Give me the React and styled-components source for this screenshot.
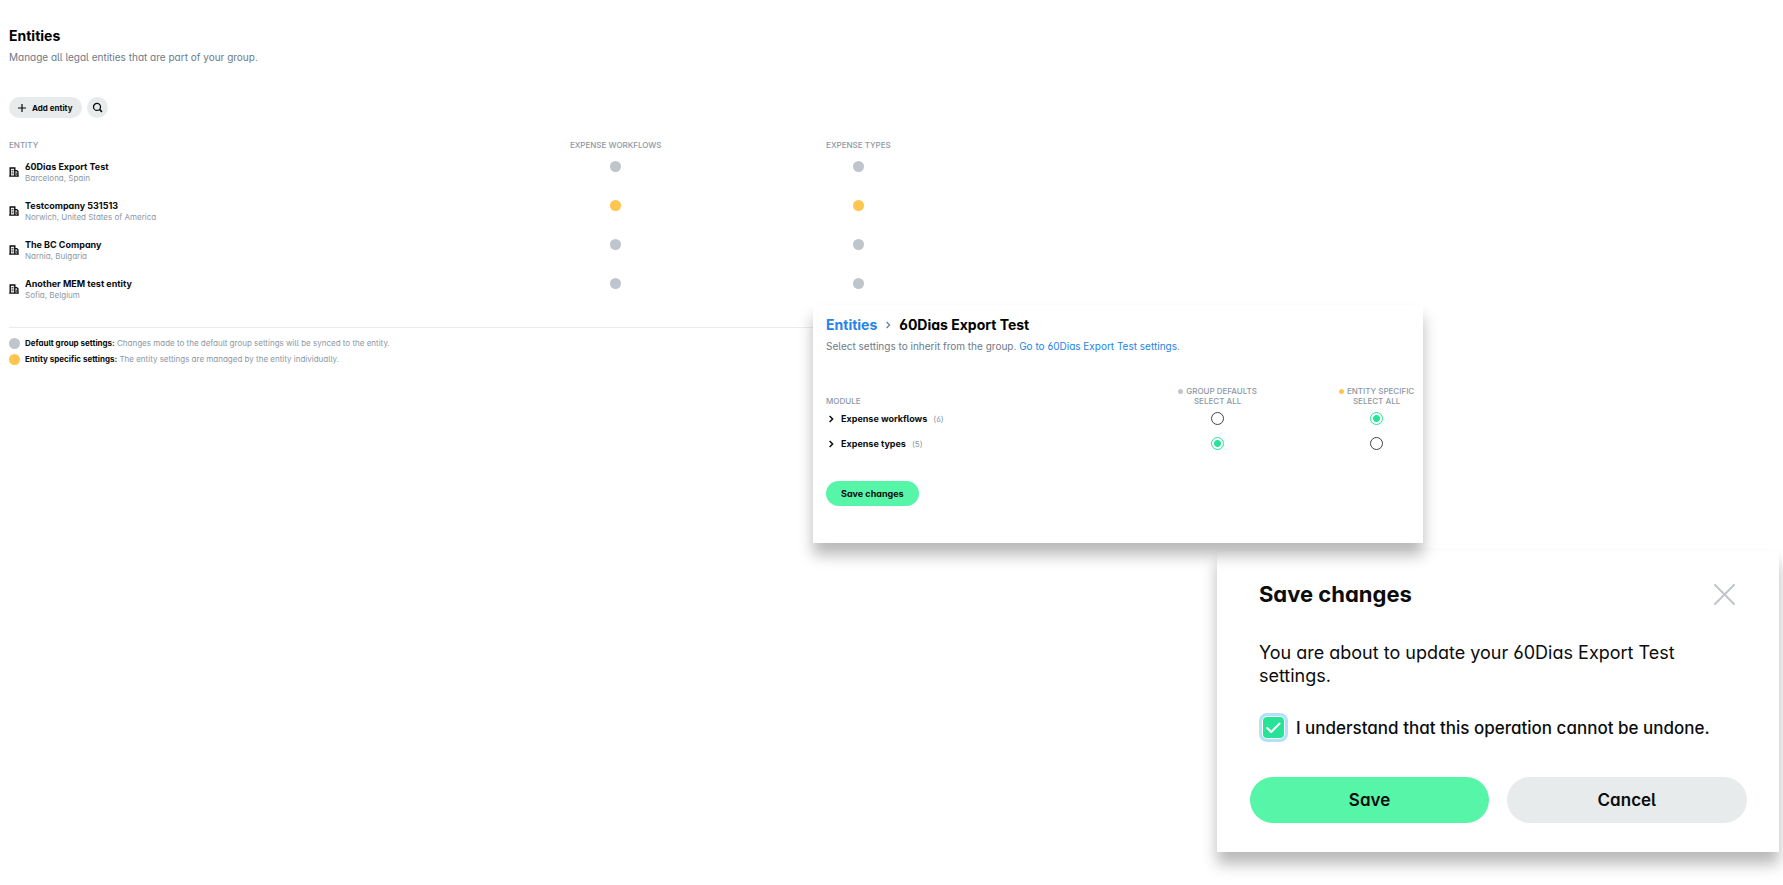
import React from "react";
import styled, { createGlobalStyle } from "styled-components";

const GlobalStyle = createGlobalStyle`
  *, *::before, *::after { box-sizing: border-box; }
  body {
    margin: 0;
    background: #fff;
    color: #0b0c0d;
    font-family: Inter, "Liberation Sans", sans-serif;
    font-feature-settings: "cv11", "cv05", "cv03", "cv04";
  }
  h1, h2, p, ul { margin: 0; padding: 0; }
  button, input { font: inherit; font-feature-settings: inherit; color: inherit; margin: 0; }
`;

const gray = "#bfc5cc";
const yellow = "#ffc54f";
const mint = "#57f5a8";
const green = "#27e397";
const muted = "#8c98a4";
const cloud = "#e7ebeb";

const Page = styled.div`
  position: relative;
  min-height: 100vh;
  padding: 26px 9px 0;
`;

const Title = styled.h1`
  display: flex;
  align-items: center;
  font-size: 14px;
  line-height: 20px;
  font-weight: 700;
  color: #000;
`;

const Subtitle = styled.p`
  margin-top: 3px;
  font-size: 10px;
  line-height: 16px;
  color: #6e7a87;
`;

const Link = styled.a`
  color: #2583ea;
  text-decoration: none;
`;

const Toolbar = styled.div`
  display: flex;
  gap: 5px;
  margin-top: 32px;
`;

const buttonSizes = {
  small: { height: 21, padding: "0 9px 0 8px", font: 8, weight: 700 },
  medium: { height: 25, padding: "0 15px", font: 9, weight: 700 },
  large: { height: 46, padding: "0 24px", font: 17, weight: 600 },
};

const Button = styled.button`
  display: inline-flex;
  align-items: center;
  justify-content: center;
  gap: 5px;
  height: ${(p) => buttonSizes[p.$size].height}px;
  padding: ${(p) => buttonSizes[p.$size].padding};
  flex: ${(p) => (p.$size === "large" ? "1" : "none")};
  border: 0;
  border-radius: 23px;
  background: ${(p) => (p.$primary ? mint : cloud)};
  font-size: ${(p) => buttonSizes[p.$size].font}px;
  font-weight: ${(p) => buttonSizes[p.$size].weight};
  white-space: nowrap;
`;

const IconButton = styled(Button)`
  width: 21px;
  padding: 0;
`;

const EntityArea = styled.section`
  width: 55%;
`;

const Table = styled.table`
  width: 100%;
  margin-top: ${(p) => p.$gap}px;
  border-collapse: collapse;
  table-layout: fixed;
`;

const Th = styled.th`
  width: ${(p) => p.$w};
  height: ${(p) => p.$h}px;
  padding: 0;
  vertical-align: ${(p) => p.$valign || "middle"};
  text-align: ${(p) => (p.$center ? "center" : "left")};
  font-size: 8px;
  line-height: 10px;
  font-weight: 500;
  color: ${muted};
  text-transform: uppercase;
  white-space: nowrap;
`;

const EntityCell = styled.td`
  height: 39px;
  padding: 10px 0 0;
  vertical-align: top;
`;

const DotCell = styled(EntityCell)`
  text-align: center;
  line-height: 0;
`;

const Entity = styled.div`
  display: flex;
  align-items: center;
  gap: 6px;
`;

const EntityName = styled.div`
  font-size: 9px;
  line-height: 12px;
  font-weight: 700;
`;

const EntityPlace = styled.div`
  font-size: 8px;
  line-height: 10px;
  color: ${muted};
`;

const Dot = styled.span`
  display: inline-block;
  flex: none;
  width: ${(p) => (p.$small ? 5 : 11)}px;
  height: ${(p) => (p.$small ? 5 : 11)}px;
  margin-right: ${(p) => (p.$small ? 3 : 0)}px;
  border-radius: 50%;
  background: ${(p) => (p.$specific ? yellow : gray)};
`;

const Legend = styled.ul`
  margin-top: 20px;
  padding-top: 7px;
  border-top: 1px solid #e9ebed;
  list-style: none;
`;

const LegendItem = styled.li`
  display: flex;
  align-items: center;
  gap: 5px;
  font-size: 8px;
  line-height: 16px;
  color: ${muted};
  strong { font-weight: 700; color: #0b0c0d; }
`;

const Floating = styled.section`
  position: absolute;
  background: #fff;
  box-shadow: 0 12px 14px rgba(0, 0, 0, 0.28);
`;

const SettingsPanel = styled(Floating)`
  z-index: 2;
  top: 305px;
  left: 45.6%;
  width: 34.2%;
  padding: 10px 8px 37px 13px;
`;

const Crumb = styled.span`
  display: inline-flex;
  margin: 0 6px;
`;

const ModuleCell = styled.td`
  height: 25px;
  padding: 0;
  text-align: ${(p) => (p.$center ? "center" : "left")};
  line-height: 0;
`;

const ModuleToggle = styled.button`
  display: flex;
  align-items: center;
  padding: 0;
  border: 0;
  background: none;
  font-size: 9px;
  line-height: 12px;
  font-weight: 700;
  svg { margin-right: 5px; }
  small {
    margin-left: 6px;
    font-size: 8px;
    font-weight: 400;
    color: ${muted};
  }
`;

const Radio = styled.input`
  appearance: none;
  width: 13px;
  height: 13px;
  border: 1px solid #3c444d;
  border-radius: 50%;
  background: #fff;
  &:checked {
    border-color: ${green};
    background: radial-gradient(circle, ${green} 3px, #fff 4px);
  }
`;

const SaveRow = styled.div`
  display: flex;
  margin-top: 25px;
`;

const Dialog = styled(Floating)`
  z-index: 1;
  top: 551px;
  left: 68.25%;
  width: 31.5%;
  padding: 29px 32px 29px 33px;
`;

const DialogHeader = styled.header`
  display: flex;
  align-items: center;
  justify-content: space-between;
  padding: 0 12px 0 9px;
`;

const DialogTitle = styled.h2`
  font-size: 22px;
  line-height: 28px;
  font-weight: 700;
`;

const CloseButton = styled.button`
  display: flex;
  padding: 0;
  border: 0;
  background: none;
`;

const DialogText = styled.p`
  margin-top: 33px;
  padding: 0 9px;
  font-size: 18px;
  line-height: 23px;
`;

const Confirm = styled.label`
  display: flex;
  align-items: center;
  gap: 8px;
  height: 29px;
  margin-top: 26px;
  padding: 0 0 0 9px;
  font-size: 17px;
  font-weight: 500;
  white-space: nowrap;
`;

const CheckWrap = styled.span`
  display: grid;
  flex: none;
  svg, input { grid-area: 1 / 1; place-self: center; }
  svg { pointer-events: none; z-index: 1; }
`;

const Checkbox = styled.input`
  appearance: none;
  width: 29px;
  height: 29px;
  border: 3px solid #b4e1f9;
  border-radius: 8px;
  background: #fff;
  &:checked {
    background: ${green} padding-box;
    box-shadow: inset 0 0 0 1px #fff;
  }
`;

const DialogActions = styled.div`
  display: flex;
  gap: 18px;
  margin-top: 35px;
`;

function PlusIcon() {
  return (
    <svg width="10" height="10" viewBox="0 0 10 10" fill="none" stroke="#0b0c0d" aria-hidden="true">
      <path d="M5 1v8M1 5h8" strokeWidth="1.2" />
    </svg>
  );
}

function SearchIcon() {
  return (
    <svg width="11" height="11" viewBox="0 0 11 11" fill="none" stroke="#0b0c0d" aria-hidden="true">
      <circle cx="5" cy="4.9" r="3.5" strokeWidth="1.3" />
      <path d="M7.5 7.4L10 9.9" strokeWidth="1.5" />
    </svg>
  );
}

function BuildingIcon() {
  return (
    <svg width="10" height="10" viewBox="0 0 10 10" fill="none" stroke="#0b0c0d" aria-hidden="true">
      <path d="M1.2 8.9V1h4.6v7.9M5.8 3.6h1.9l1.2 1.2v4.1M0.2 9.1h9.6" strokeWidth="1.4" />
      <path d="M2.5 3.4h2M2.5 5.1h2M2.5 6.8h2M7.3 5.6v2.4" strokeWidth="0.8" />
    </svg>
  );
}

function ChevronIcon({ color, strokeWidth, size }) {
  return (
    <svg width={size} height={size} viewBox="0 0 10 10" fill="none" stroke={color} strokeWidth={strokeWidth} aria-hidden="true">
      <path d="M3.6 2L6.6 5L3.6 8" />
    </svg>
  );
}

function CloseIcon() {
  return (
    <svg width="21" height="21" viewBox="0 0 21 21" fill="none" stroke={gray} strokeWidth="2" strokeLinecap="round" aria-hidden="true">
      <path d="M1 1l19 19M20 1L1 20" />
    </svg>
  );
}

function CheckIcon() {
  return (
    <svg width="15" height="12" viewBox="0 0 15 12" fill="none" stroke="#fff" strokeWidth="2" strokeLinecap="round" strokeLinejoin="round" aria-hidden="true">
      <path d="M1.2 6l4 4L13.5 1.5" />
    </svg>
  );
}

const entities = [
  { name: "60Dias Export Test", place: "Barcelona, Spain" },
  { name: "Testcompany 531513", place: "Norwich, United States of America", specific: true },
  { name: "The BC Company", place: "Narnia, Bulgaria" },
  { name: "Another MEM test entity", place: "Sofia, Belgium" },
];

const modules = [
  { name: "Expense workflows", count: 6, specific: true },
  { name: "Expense types", count: 5, specific: false },
];

export default function App() {
  return (
    <>
      <GlobalStyle />
      <Page>
        <Title>Entities</Title>
        <Subtitle>Manage all legal entities that are part of your group.</Subtitle>
        <Toolbar>
          <Button $size="small"><PlusIcon />Add entity</Button>
          <IconButton $size="small" aria-label="Search"><SearchIcon /></IconButton>
        </Toolbar>
        <EntityArea>
          <Table $gap={20}>
            <thead>
              <tr>
                <Th $w="50%" $h={13}>Entity</Th>
                <Th $w="25%" $h={13} $center>Expense workflows</Th>
                <Th $w="25%" $h={13} $center>Expense types</Th>
              </tr>
            </thead>
            <tbody>
              {entities.map((e) => (
                <tr key={e.name}>
                  <EntityCell>
                    <Entity>
                      <BuildingIcon />
                      <div>
                        <EntityName>{e.name}</EntityName>
                        <EntityPlace>{e.place}</EntityPlace>
                      </div>
                    </Entity>
                  </EntityCell>
                  <DotCell><Dot $specific={e.specific} /></DotCell>
                  <DotCell><Dot $specific={e.specific} /></DotCell>
                </tr>
              ))}
            </tbody>
          </Table>
          <Legend>
            <LegendItem>
              <Dot />
              <span><strong>Default group settings:</strong> Changes made to the default group settings will be synced to the entity.</span>
            </LegendItem>
            <LegendItem>
              <Dot $specific />
              <span><strong>Entity specific settings:</strong> The entity settings are managed by the entity individually.</span>
            </LegendItem>
          </Legend>
        </EntityArea>

        <SettingsPanel>
          <Title as="h2">
            <Link href="#entities">Entities</Link>
            <Crumb><ChevronIcon size={10} color="#6e7a87" strokeWidth="1.2" /></Crumb>
            60Dias Export Test
          </Title>
          <Subtitle>
            Select settings to inherit from the group. <Link href="#settings">Go to 60Dias Export Test settings</Link>.
          </Subtitle>
          <Table $gap={31}>
            <thead>
              <tr>
                <Th $w="46%" $h={21} $valign="bottom">Module</Th>
                <Th $w="41%" $h={21} $valign="bottom" $center><Dot $small />Group defaults<br />Select all</Th>
                <Th $w="13%" $h={21} $valign="bottom" $center><Dot $small $specific />Entity specific<br />Select all</Th>
              </tr>
            </thead>
            <tbody>
              {modules.map((m) => (
                <tr key={m.name}>
                  <ModuleCell>
                    <ModuleToggle>
                      <ChevronIcon size={10} color="#0b0c0d" strokeWidth="1.5" />
                      {m.name}<small>({m.count})</small>
                    </ModuleToggle>
                  </ModuleCell>
                  <ModuleCell $center>
                    <Radio type="radio" name={m.name} aria-label={`${m.name}: group defaults`} defaultChecked={!m.specific} />
                  </ModuleCell>
                  <ModuleCell $center>
                    <Radio type="radio" name={m.name} aria-label={`${m.name}: entity specific`} defaultChecked={m.specific} />
                  </ModuleCell>
                </tr>
              ))}
            </tbody>
          </Table>
          <SaveRow>
            <Button $size="medium" $primary>Save changes</Button>
          </SaveRow>
        </SettingsPanel>

        <Dialog role="dialog" aria-labelledby="dialog-title">
          <DialogHeader>
            <DialogTitle id="dialog-title">Save changes</DialogTitle>
            <CloseButton aria-label="Close"><CloseIcon /></CloseButton>
          </DialogHeader>
          <DialogText>You are about to update your 60Dias Export Test settings.</DialogText>
          <Confirm>
            <CheckWrap>
              <Checkbox type="checkbox" defaultChecked />
              <CheckIcon />
            </CheckWrap>
            I understand that this operation cannot be undone.
          </Confirm>
          <DialogActions>
            <Button $size="large" $primary>Save</Button>
            <Button $size="large">Cancel</Button>
          </DialogActions>
        </Dialog>
      </Page>
    </>
  );
}
